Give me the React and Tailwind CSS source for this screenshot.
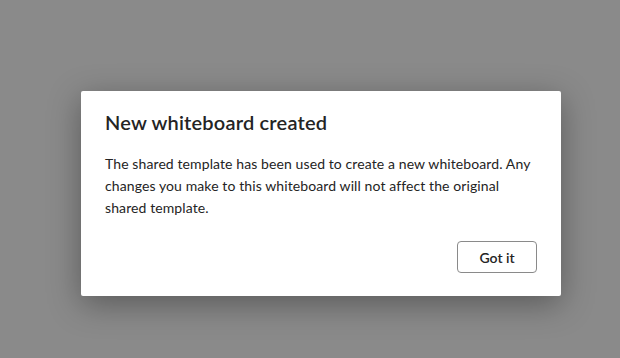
export default function App() {
  return (
    <div
      className="w-[620px] h-[358px] bg-[#8a8a8a] pl-[81px] pt-[91px] overflow-hidden"
      style={{ fontFamily: 'Lato, "Noto Sans", Arial, sans-serif' }}
    >
      <div className="w-[480px] bg-white rounded-[2px] shadow-[0_8px_32px_rgba(0,0,0,0.35)] px-6 pt-[17px] pb-[23px] text-[#242424]">
        <h2 className="text-[20px] leading-[28px] font-semibold tracking-[0.2px]">New whiteboard created</h2>
        <p className="mt-[17px] text-[14px] leading-[22px] tracking-[0.1px]">
          The shared template has been used to create a new whiteboard. Any changes you make to this
          whiteboard will not affect the original shared template.
        </p>
        <div className="flex justify-end mt-[22px]">
          <button className="w-[80px] h-[32px] border border-[#8a8a8a] rounded-[4px] bg-white text-[14px] font-semibold">
            Got it
          </button>
        </div>
      </div>
    </div>
  );
}
